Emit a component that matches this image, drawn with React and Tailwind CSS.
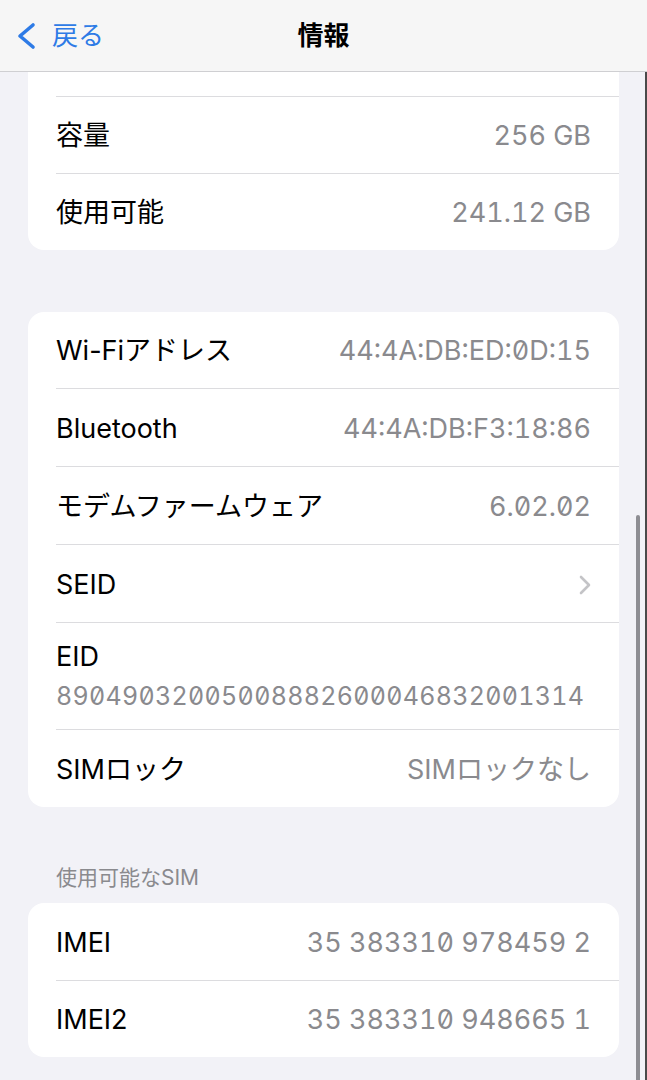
const font = { fontFamily: 'Inter, "Noto Sans CJK JP", sans-serif' }

function Chevron() {
  return (
    <svg width="14" height="20" viewBox="0 0 14 20" fill="none" className="-mr-[1px]">
      <path d="M3 2 L11 10 L3 18" stroke="#c4c4c7" strokeWidth="2.6" strokeLinecap="round" strokeLinejoin="round" />
    </svg>
  )
}

function Row({ label, value, h = 'h-[77px]', first = false, chevron = false }) {
  return (
    <div
      className={`flex items-center justify-between pr-[28px] pt-[3px] ${h} ${first ? '' : 'border-t border-[#dcdcdf]'}`}
    >
      <span className="text-[27px] text-black">{label}</span>
      {chevron ? (
        <Chevron />
      ) : (
        <span className="text-[27px] text-[#8a8a8e] tabular-nums slashed-zero">{value}</span>
      )}
    </div>
  )
}

function Card({ children, className = '' }) {
  return (
    <div className={`mx-[28px] bg-white rounded-[16px] pl-[28px] ${className}`}>
      {children}
    </div>
  )
}

export default function App() {
  return (
    <div className="relative w-[647px] h-[1080px] overflow-hidden bg-[#f2f2f7]" style={font}>
      {/* Nav bar */}
      <div className="absolute inset-x-0 top-0 z-10 h-[72px] bg-[#f6f6f6] border-b border-[#cfcfd2] flex items-center">
        <div className="flex items-center pl-[14px] text-[#2e7be6]">
          <svg width="24" height="28" viewBox="0 0 24 28" fill="none">
            <path d="M19 3 L6 14 L19 25" stroke="currentColor" strokeWidth="3.6" strokeLinecap="round" strokeLinejoin="round" />
          </svg>
          <span className="ml-[14px] text-[26px] leading-none">戻る</span>
        </div>
        <span className="absolute left-1/2 -translate-x-1/2 text-[26px] font-bold text-black leading-none">情報</span>
      </div>

      {/* Content */}
      <div className="pt-[72px]">
        <div className="mx-[28px] bg-white rounded-b-[16px] pl-[28px]">
          <div className="h-[24px]" />
          <Row label="容量" value="256 GB" />
          <Row label="使用可能" value="241.12 GB" />
        </div>

        <div className="h-[62px]" />

        <Card>
          <Row label="Wi-Fiアドレス" value="44:4A:DB:ED:0D:15" h="h-[76px]" first />
          <Row label="Bluetooth" value="44:4A:DB:F3:18:86" h="h-[78px]" />
          <Row label="モデムファームウェア" value="6.02.02" h="h-[78px]" />
          <Row label="SEID" chevron h="h-[78px]" />
          <div className="h-[107px] pr-[28px] border-t border-[#dcdcdf] flex flex-col justify-center">
            <span className="text-[27px] text-black leading-[34px]">EID</span>
            <span className="mt-[5px] text-[25px] text-[#8a8a8e] tabular-nums slashed-zero leading-[34px] tracking-[0.3px]">
              89049032005008882600046832001314
            </span>
          </div>
          <Row label="SIMロック" value="SIMロックなし" h="h-[78px]" />
        </Card>

        <div className="h-[96px] flex items-end pl-[56px] pb-[12px]">
          <span className="text-[21px] text-[#8a8a8e] leading-[26px]">使用可能なSIM</span>
        </div>

        <Card>
          <Row label="IMEI" value="35 383310 978459 2" first />
          <Row label="IMEI2" value="35 383310 948665 1" />
        </Card>
      </div>

      {/* Scroll indicator */}
      <div className="absolute right-[7px] top-[515px] -bottom-[20px] w-[4px] rounded-full bg-[#8e8e93]" />
      <div className="absolute right-0 top-[72px] bottom-0 w-[2px] bg-[#4a4a4a]" />
    </div>
  )
}
